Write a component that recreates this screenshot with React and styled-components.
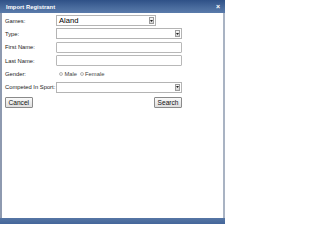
import styled, { createGlobalStyle } from "styled-components";

const GlobalStyle = createGlobalStyle`
  html, body {
    margin: 0;
    padding: 0;
    background: #ffffff;
  }
  body {
    width: 225px;
    height: 225px;
    overflow: hidden;
    font-family: "Liberation Sans", Arial, sans-serif;
  }
`;

const fields = [
  { label: "Games:", kind: "select", value: "Aland", short: true },
  { label: "Type:", kind: "select" },
  { label: "First Name:", kind: "text" },
  { label: "Last Name:", kind: "text" },
  { label: "Gender:", kind: "radio" },
  { label: "Competed In Sport:", kind: "select" },
];

const Arrow = () => (
  <svg width="3" height="2" viewBox="0 0 3 2">
    <path d="M0 0 H3 L1.5 2 Z" fill="#222" />
  </svg>
);

const App = () => {
  return (
    <>
      <GlobalStyle />
      <Dialog>
        <TitleBar>
          <Title>Import Registrant</Title>
          <Close>×</Close>
        </TitleBar>
        <Body>
          <Form>
            {fields.map((f) => (
              <Row key={f.label}>
                <Label>{f.label}</Label>
                {f.kind === "select" && (
                  <Select $short={f.short}>
                    <SelectValue>{f.value}</SelectValue>
                    <ArrowBox>
                      <Arrow />
                    </ArrowBox>
                  </Select>
                )}
                {f.kind === "text" && <TextInput />}
                {f.kind === "radio" && (
                  <Radios>
                    <Radio /> <RadioLabel>Male</RadioLabel>
                    <Radio /> <RadioLabel>Female</RadioLabel>
                  </Radios>
                )}
              </Row>
            ))}
          </Form>
          <Buttons>
            <Button>Cancel</Button>
            <Button>Search</Button>
          </Buttons>
        </Body>
        <FooterBar />
      </Dialog>
    </>
  );
};

export default App;

const Dialog = styled.div`
  width: 225px;
  height: 224px;
  box-sizing: border-box;
  display: flex;
  flex-direction: column;
  border-left: 2px solid #8e9ab0;
  border-right: 2px solid #a9b3c3;
  background: #ffffff;
`;

const TitleBar = styled.div`
  height: 13px;
  margin: 0 -2px;
  display: flex;
  align-items: center;
  justify-content: space-between;
  padding: 0 5px 0 6px;
  background: linear-gradient(#2f5187, #4a6c9e 60%, #5a7bab);
  color: #ffffff;
`;

const Title = styled.span`
  font-size: 5.8px;
  font-weight: bold;
  letter-spacing: 0.05px;
`;

const Close = styled.span`
  font-size: 7px;
  font-weight: bold;
  line-height: 1;
`;

const Body = styled.div`
  flex: 1;
  padding: 2px 0 0 3px;
`;

const Form = styled.div`
  display: grid;
  grid-auto-rows: 11px;
  row-gap: 2.4px;
`;

const Row = styled.div`
  display: grid;
  grid-template-columns: 51px 1fr;
  align-items: center;
`;

const Label = styled.span`
  font-size: 5.8px;
  color: #1a1a1a;
  white-space: nowrap;
`;

const Select = styled.div`
  width: ${(p) => (p.$short ? "100px" : "126px")};
  height: 11px;
  box-sizing: border-box;
  border: 1px solid #b4b4b4;
  display: flex;
  align-items: center;
  justify-content: space-between;
  padding: 0 1px 0 1px;
`;

const SelectValue = styled.span`
  font-size: 7.6px;
  color: #000;
  padding-left: 1px;
`;

const ArrowBox = styled.span`
  width: 5px;
  height: 7px;
  box-sizing: border-box;
  border: 1px solid #9c9c9c;
  background: linear-gradient(#f7f7f7, #d6d6d6);
  display: flex;
  align-items: center;
  justify-content: center;
`;

const TextInput = styled.div`
  width: 126px;
  height: 11px;
  box-sizing: border-box;
  border: 1px solid #b8b8b8;
  border-radius: 1px;
`;

const Radios = styled.div`
  display: flex;
  align-items: center;
  gap: 1.5px;
  padding-left: 3px;
`;

const Radio = styled.span`
  width: 4px;
  height: 4px;
  box-sizing: border-box;
  border: 1px solid #b8b8b8;
  border-radius: 50%;
  background: #f2f2f2;
`;

const RadioLabel = styled.span`
  font-size: 5.8px;
  color: #444;
  margin-right: 1px;
`;

const Buttons = styled.div`
  display: flex;
  justify-content: space-between;
  width: 177px;
  margin-top: 4px;
`;

const Button = styled.div`
  height: 11px;
  box-sizing: border-box;
  padding: 0 2.5px;
  display: flex;
  align-items: center;
  border: 1px solid #8a8a8a;
  border-radius: 1px;
  background: linear-gradient(#fafafa, #dedede);
  font-size: 6.6px;
  color: #111;
`;

const FooterBar = styled.div`
  height: 6px;
  margin: 0 -2px;
  background: linear-gradient(#5676a4, #44669a);
`;
